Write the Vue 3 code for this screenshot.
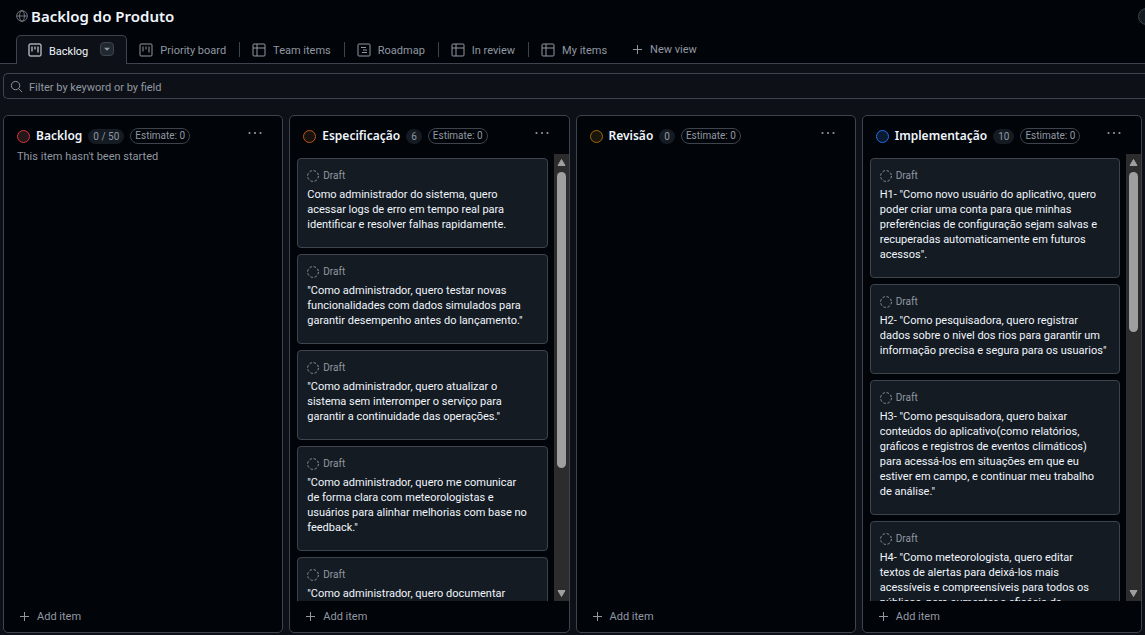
<script setup>
import { ref } from 'vue'

const filter = ref('')

const tabs = [
  { name: 'Backlog', icon: 'board', active: true },
  { name: 'Priority board', icon: 'board' },
  { name: 'Team items', icon: 'table' },
  { name: 'Roadmap', icon: 'roadmap' },
  { name: 'In review', icon: 'table' },
  { name: 'My items', icon: 'table' },
]

const columns = [
  { name: 'Backlog', tone: 'red', count: '0 / 50', note: "This item hasn't been started", cards: [] },
  {
    name: 'Especificação',
    tone: 'orange',
    count: '6',
    thumb: 72,
    cards: [
      ['Como administrador do sistema, quero', 'acessar logs de erro em tempo real para', 'identificar e resolver falhas rapidamente.'],
      ['"Como administrador, quero testar novas', 'funcionalidades com dados simulados para', 'garantir desempenho antes do lançamento."'],
      ['"Como administrador, quero atualizar o', 'sistema sem interromper o serviço para', 'garantir a continuidade das operações."'],
      ['"Como administrador, quero me comunicar', 'de forma clara com meteorologistas e', 'usuários para alinhar melhorias com base no', 'feedback."'],
      ['"Como administrador, quero documentar'],
    ],
  },
  { name: 'Revisão', tone: 'yellow', count: '0', cards: [] },
  {
    name: 'Implementação',
    tone: 'blue',
    count: '10',
    thumb: 39,
    cards: [
      ['H1- "Como novo usuário do aplicativo, quero', 'poder criar uma conta para que minhas', 'preferências de configuração sejam salvas e', 'recuperadas automaticamente em futuros', 'acessos".'],
      ['H2- "Como pesquisadora, quero registrar', 'dados sobre o nivel dos rios para garantir um', 'informação precisa e segura para os usuarios"'],
      ['H3- "Como pesquisadora, quero baixar', 'conteúdos do aplicativo(como relatórios,', 'gráficos e registros de eventos climáticos)', 'para acessá-los em situações em que eu', 'estiver em campo, e continuar meu trabalho', 'de análise."'],
      ['H4- "Como meteorologista, quero editar', 'textos de alertas para deixá-los mais', 'acessíveis e compreensíveis para todos os', 'públicos, para aumentar a eficácia da'],
    ],
  },
]
</script>

<template>
  <div class="app">
    <header class="top">
      <svg class="globe" viewBox="0 0 16 16" aria-hidden="true">
        <circle cx="8" cy="8" r="7.1" />
        <ellipse cx="8" cy="8" rx="3.2" ry="7.1" />
        <path d="M1 8h14" />
      </svg>
      <h1>Backlog do Produto</h1>
      <button class="round" type="button" aria-label="Status"></button>
    </header>

    <nav class="tabs" aria-label="Views">
      <div v-for="tab in tabs" :key="tab.name" class="tab" :class="{ active: tab.active }">
        <a href="#">
          <svg viewBox="0 0 14 14" aria-hidden="true">
            <rect x="1" y="1" width="12" height="12" rx="1" />
            <path v-if="tab.icon === 'board'" d="M4 3.500v5M7 3.500v3M10 3.500v6" />
            <path v-else-if="tab.icon === 'table'" d="M1 5h12M5 1v12" />
            <path v-else d="M4 4.500h5M6 7h4M5 9.500h5" />
          </svg>
          <span>{{ tab.name }}</span>
        </a>
        <button v-if="tab.active" class="drop" type="button" aria-label="View options">
          <svg viewBox="0 0 14 14" aria-hidden="true"><path d="M3.500 5.500h7L7 9z" /></svg>
        </button>
      </div>
      <button class="new-view" type="button">
        <svg viewBox="0 0 11 11" aria-hidden="true"><path d="M5.500 1v9M1 5.500h9" /></svg>
        New view
      </button>
    </nav>

    <main class="content">
      <label class="filter">
        <svg viewBox="0 0 14 14" aria-hidden="true">
          <circle cx="6" cy="6" r="4.500" />
          <path d="M9.300 9.300L13 13" />
        </svg>
        <input v-model="filter" type="text" placeholder="Filter by keyword or by field" aria-label="Filter by keyword or by field" />
      </label>

      <div class="board">
        <section v-for="col in columns" :key="col.name" class="column">
          <header class="head">
            <span class="dot" :class="col.tone"></span>
            <h2>{{ col.name }}</h2>
            <span class="count">{{ col.count }}</span>
            <span class="estimate">Estimate: 0</span>
            <button class="more" type="button" aria-label="Column options">
              <svg viewBox="0 0 14 4" aria-hidden="true">
                <circle cx="1.500" cy="2" r="1.100" />
                <circle cx="7" cy="2" r="1.100" />
                <circle cx="12.500" cy="2" r="1.100" />
              </svg>
            </button>
          </header>
          <p v-if="col.note" class="note">{{ col.note }}</p>
          <div class="body">
            <div v-if="col.cards.length" class="cards">
              <article v-for="card in col.cards" :key="card[0]" class="card">
                <div class="draft">
                  <svg viewBox="0 0 12 12" aria-hidden="true"><circle cx="6" cy="6" r="5.400" /></svg>
                  Draft
                </div>
                <p><span v-for="line in card" :key="line">{{ line }}</span></p>
              </article>
            </div>
            <div v-if="col.thumb" class="scroll" aria-hidden="true">
              <svg viewBox="0 0 15 18"><path d="M7.500 5.500L11 11.500H4z" /></svg>
              <div class="rail"><div class="thumb" :style="{ height: col.thumb + '%' }"></div></div>
              <svg viewBox="0 0 15 18"><path d="M7.500 13.500L11 7.500H4z" /></svg>
            </div>
          </div>
          <button class="add" type="button">
            <svg viewBox="0 0 11 11" aria-hidden="true"><path d="M5.500 1v9M1 5.500h9" /></svg>
            Add item
          </button>
        </section>
      </div>
    </main>
  </div>
</template>

<style>
body {
  margin: 0;
  background: #0d1117;
}
</style>

<style scoped>
.app {
  height: 100vh;
  display: flex;
  flex-direction: column;
  overflow: hidden;
  background: #0d1117;
  color: #f0f6fc;
  font: 11px/15px Roboto, "Noto Sans", sans-serif;
}
.app * {
  box-sizing: border-box;
}
h1,
h2,
p {
  margin: 0;
}
button,
input {
  font: inherit;
  color: inherit;
  border: 0;
  padding: 0;
  background: none;
}
svg {
  display: block;
  flex: none;
  fill: none;
  stroke: currentColor;
}
.top {
  display: flex;
  align-items: center;
  gap: 3px;
  height: 35px;
  padding: 0 0 3px 16px;
  background: #010409;
}
.globe {
  width: 12px;
  height: 12px;
  color: #9198a1;
}
h1,
h2 {
  font-family: "Noto Sans", "Open Sans", sans-serif;
  font-weight: 600;
}
h1 {
  font-size: 15px;
  line-height: 20px;
}
.round {
  width: 17px;
  height: 17px;
  margin: 0 -10px 0 auto;
  flex: none;
  border: 1px solid #3d444d;
  border-radius: 50%;
  background: #151b23;
}
.tabs {
  display: flex;
  height: 29px;
  padding-left: 16px;
  background: #010409;
  box-shadow: inset 0 -1px #3d444d;
  color: #9198a1;
}
.tab {
  display: flex;
  align-items: center;
  position: relative;
  padding: 0 14px 0 12px;
}
.tab a {
  display: flex;
  align-items: center;
  gap: 7px;
  color: inherit;
  text-decoration: none;
}
.tab a span {
  padding-top: 2px;
}
.tab a svg {
  width: 14px;
  height: 14px;
}
.tab:not(.active)::after {
  content: "";
  position: absolute;
  right: 0;
  top: 7px;
  width: 1px;
  height: 15px;
  background: #3d444d;
}
.tab:nth-last-child(2)::after {
  display: none;
}
.tab.active {
  gap: 12px;
  padding: 0 12px 0 11px;
  color: #f0f6fc;
  background: #0d1117;
  border: 1px solid #3d444d;
  border-bottom: 0;
  border-radius: 5px 5px 0 0;
}
.drop {
  margin-bottom: 2px;
  border: 1px solid #3d444d;
  border-radius: 4px;
  background: #212830;
  color: #9198a1;
}
.drop svg {
  width: 12px;
  height: 12px;
  fill: currentColor;
  stroke: none;
}
.new-view,
.add {
  display: flex;
  align-items: center;
  gap: 7px;
  color: #9198a1;
}
.new-view {
  padding: 0 11px;
}
.new-view svg,
.add svg {
  width: 11px;
  height: 11px;
}
.content {
  flex: 1;
  min-height: 0;
  display: flex;
  flex-direction: column;
  gap: 16px;
  padding: 9px 0 2px 3px;
}
.filter {
  display: flex;
  align-items: center;
  gap: 6px;
  height: 26px;
  flex: none;
  padding-left: 6px;
  border: 1px solid #3d444d;
  border-right: 0;
  border-radius: 5px 0 0 5px;
  color: #9198a1;
}
.filter svg {
  width: 13px;
  height: 13px;
}
.filter input {
  flex: 1;
  padding-top: 2px;
  outline: 0;
}
.filter input::placeholder {
  color: #9198a1;
  opacity: 1;
}
.board {
  flex: 1;
  min-height: 0;
  display: flex;
  gap: 6px;
  padding-right: 3px;
}
.column {
  flex: 1;
  min-width: 0;
  display: flex;
  flex-direction: column;
  border: 1px solid #3d444d;
  border-radius: 5px;
  background: #010409;
}
.head {
  display: flex;
  align-items: center;
  flex: none;
  height: 38px;
  padding: 2px 20px 0 13px;
}
.dot {
  width: 13px;
  height: 13px;
  flex: none;
  border: 1px solid;
  border-radius: 50%;
}
.red {
  border-color: #da3633;
  background: #25171c;
}
.orange {
  border-color: #bd561d;
  background: #18120f;
}
.yellow {
  border-color: #9e6a03;
  background: #1a160c;
}
.blue {
  border-color: #1f6feb;
  background: #0b1a30;
}
h2 {
  margin-left: 6px;
  font-size: 12px;
  line-height: 18px;
}
.count,
.estimate {
  flex: none;
  border-radius: 8px;
  color: #9198a1;
  font-size: 10px;
}
.count {
  margin: 0 6px;
  padding: 0 5px;
  background: #151b23;
}
.estimate {
  padding: 0 4px;
  border: 1px solid #3d444d;
  line-height: 14px;
}
.more {
  margin-left: auto;
  padding-bottom: 6px;
  color: #9198a1;
}
.more svg {
  width: 14px;
  height: 4px;
  fill: currentColor;
  stroke: none;
}
.note {
  margin-top: -5px;
  padding-left: 13px;
  color: #9198a1;
}
.body {
  flex: 1;
  min-height: 0;
  display: flex;
}
.cards {
  flex: 1;
  min-width: 0;
  display: flex;
  flex-direction: column;
  gap: 6px;
  overflow: hidden;
  padding: 4px 6px 0 7px;
}
.card {
  flex: none;
  padding: 10px 9px 15px;
  border: 1px solid #3d444d;
  border-radius: 4px;
  background: #151b23;
}
.card p {
  margin-top: 4px;
}
.card p span {
  display: block;
  white-space: nowrap;
}
.draft {
  display: flex;
  align-items: center;
  gap: 4px;
  color: #9198a1;
  font-size: 10px;
  line-height: 14px;
}
.draft svg {
  width: 12px;
  height: 12px;
  stroke-dasharray: 2.4 1.84;
}
.scroll {
  display: flex;
  flex-direction: column;
  width: 15px;
  flex: none;
  background: #2c2c2c;
}
.scroll > svg {
  width: 15px;
  height: 18px;
  fill: #9f9f9f;
  stroke: #9f9f9f;
  stroke-linejoin: round;
}
.rail {
  flex: 1;
  padding: 0 3px;
}
.thumb {
  border-radius: 5px;
  background: #9f9f9f;
}
.add {
  flex: none;
  height: 31px;
  padding: 0 0 1px 15px;
}
</style>
